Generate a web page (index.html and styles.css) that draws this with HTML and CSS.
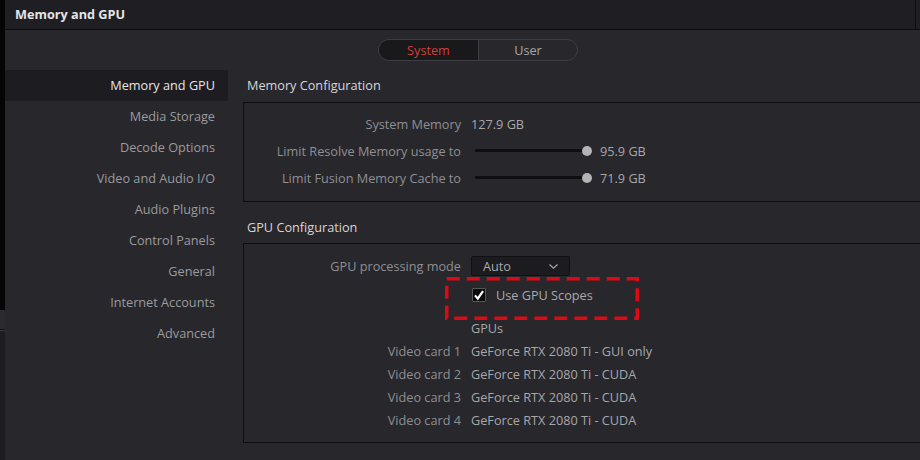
FILE: index.html
```html
<!DOCTYPE html>
<html lang="en">
<head>
    <meta charset="UTF-8">
    <title>Memory and GPU</title>
    <link rel="stylesheet" href="styles.css">
</head>
<body>
    <div class="screen">
        <!-- window behind, only its edge shows -->
        <div class="edge">
            <div class="edge-top"></div>
            <div class="edge-tab"></div>
            <div class="edge-rest"></div>
        </div>

        <div class="window">
            <div class="titlebar">Memory and GPU</div>

            <div class="tabs-row">
                <div class="tabs">
                    <span class="tab tab-active">System</span>
                    <span class="tab">User</span>
                </div>
            </div>

            <div class="main">
                <!-- settings categories -->
                <ul class="sidebar">
                    <li class="side-item selected">Memory and GPU</li>
                    <li class="side-item">Media Storage</li>
                    <li class="side-item">Decode Options</li>
                    <li class="side-item">Video and Audio I/O</li>
                    <li class="side-item">Audio Plugins</li>
                    <li class="side-item">Control Panels</li>
                    <li class="side-item">General</li>
                    <li class="side-item">Internet Accounts</li>
                    <li class="side-item">Advanced</li>
                </ul>

                <div class="content">
                    <h2 class="section-title first">Memory Configuration</h2>
                    <div class="panel panel-memory">
                        <div class="row">
                            <span class="label">System Memory</span>
                            <span class="value">127.9 GB</span>
                        </div>
                        <div class="row">
                            <span class="label">Limit Resolve Memory usage to</span>
                            <span class="slider"><span class="track"></span><span class="thumb"></span></span>
                            <span class="value">95.9 GB</span>
                        </div>
                        <div class="row">
                            <span class="label">Limit Fusion Memory Cache to</span>
                            <span class="slider"><span class="track"></span><span class="thumb"></span></span>
                            <span class="value">71.9 GB</span>
                        </div>
                    </div>

                    <h2 class="section-title">GPU Configuration</h2>
                    <div class="panel panel-gpu">
                        <div class="row row-mode">
                            <span class="label">GPU processing mode</span>
                            <span class="dropdown">
                                Auto
                                <svg class="chevron" width="11" height="7" viewBox="0 0 11 7">
                                    <path d="M1.5 1.5 L5.5 5.2 L9.5 1.5" fill="none" stroke="#a9a9ad" stroke-width="1.1"/>
                                </svg>
                            </span>
                        </div>
                        <div class="row row-check">
                            <span class="label"></span>
                            <span class="checkbox">
                                <svg width="14" height="14" viewBox="0 0 14 14">
                                    <path d="M3 7.4 L5.8 10.6 L11 3.2" fill="none" stroke="#ffffff" stroke-width="2.2"/>
                                </svg>
                            </span>
                            <span class="check-label">Use GPU Scopes</span>
                        </div>
                        <div class="gpu-list">
                            <div class="row row-small">
                                <span class="label"></span>
                                <span class="value">GPUs</span>
                            </div>
                            <div class="row row-small">
                                <span class="label">Video card 1</span>
                                <span class="value">GeForce RTX 2080 Ti - GUI only</span>
                            </div>
                            <div class="row row-small">
                                <span class="label">Video card 2</span>
                                <span class="value">GeForce RTX 2080 Ti - CUDA</span>
                            </div>
                            <div class="row row-small">
                                <span class="label">Video card 3</span>
                                <span class="value">GeForce RTX 2080 Ti - CUDA</span>
                            </div>
                            <div class="row row-small">
                                <span class="label">Video card 4</span>
                                <span class="value">GeForce RTX 2080 Ti - CUDA</span>
                            </div>
                        </div>

                        <!-- red dashed highlight drawn over the checkbox -->
                        <svg class="highlight" width="194" height="43" viewBox="0 0 194 43">
                            <rect x="1.75" y="1.75" width="190.5" height="39.5" fill="none"
                                  stroke="#dc0a14" stroke-width="3.5" stroke-dasharray="13 7"/>
                        </svg>
                    </div>
                </div>
            </div>
        </div>
    </div>
</body>
</html>
```

FILE: styles.css
```css
/* Page base */
body {
    margin: 0;
    background-color: #000000;
    font-family: "Open Sans", "Noto Sans", sans-serif;
    font-size: 12.7px;
}

.screen {
    display: flex;
    width: 920px;
    height: 460px;
    overflow: hidden;
}

/* Edge of the window behind */
.edge {
    width: 5px;
    display: flex;
    flex-direction: column;
}

.edge-top {
    height: 310px;
    background-color: #050505;
}

.edge-tab {
    height: 19px;
    background-color: #2b2a2f;
    border-bottom: 1px solid #121214;
}

.edge-rest {
    flex: 1;
    background-color: #1d1d21;
    border-top: 1px solid #3a3a3e;
}

/* Preferences window */
.window {
    flex: 1;
    background-color: #28272c;
}

.titlebar {
    height: 29px;
    line-height: 29px;
    padding-left: 10px;
    font-weight: bold;
    color: #e4e4e6;
    border-bottom: 1px solid #0d0d0f;
    background: linear-gradient(to right, #1f1e22 calc(100% - 5px), #0d0d0f calc(100% - 5px),
                #0d0d0f calc(100% - 4px), #1f1e22 calc(100% - 4px));
}

/* System / User switch */
.tabs-row {
    display: flex;
    padding: 9px 0 0 373px;
}

.tabs {
    display: flex;
    height: 20px;
    border: 1px solid #3e3d43;
    border-radius: 11px;
    overflow: hidden;
}

.tab {
    width: 98px;
    line-height: 20px;
    text-align: center;
    color: #a6a6a9;
}

.tab-active {
    width: 99px;
    background-color: #19181b;
    border-right: 1px solid #3e3d43;
    color: #d2403c;
}

/* Main area */
.main {
    display: flex;
    margin-top: 9px;
}

.sidebar {
    list-style: none;
    margin: 0;
    padding: 0;
    width: 223px;
}

.side-item {
    height: 31px;
    line-height: 31px;
    padding-right: 13px;
    text-align: right;
    color: #9b9b9e;
}

.side-item.selected {
    background-color: #1d1c20;
    color: #e6e6e8;
}

.content {
    flex: 1;
    margin-left: 15px;
}

.section-title {
    margin: 0;
    padding: 10px 0 0 4px;
    height: 31px;
    line-height: 31px;
    font-size: inherit;
    font-weight: normal;
    color: #d6d6d8;
}

.section-title.first {
    padding-top: 0;
    height: 32px;
    line-height: 31px;
}

.panel {
    position: relative;
    border: 1px solid #0e0e10;
    border-right: none;
}

.panel-memory {
    padding: 7px 0 10px 0;
}

.panel-gpu {
    height: 189px;
    padding-top: 9px;
}

/* Label / value rows */
.row {
    display: flex;
    align-items: center;
    height: 27px;
}

.label {
    width: 217px;
    margin-right: 10px;
    text-align: right;
    color: #8f8f92;
}

.value {
    color: #a7a7aa;
}

.slider {
    position: relative;
    display: flex;
    align-items: center;
    width: 122px;
    height: 10px;
    margin-right: 7px;
}

.track {
    margin-left: 4px;
    width: 113px;
    height: 3px;
    background-color: #0f0f11;
    border-radius: 1px;
}

.thumb {
    position: absolute;
    left: 111px;
    top: 0;
    width: 10px;
    height: 10px;
    border-radius: 50%;
    background-color: #b4b4b6;
}

/* GPU mode dropdown */
.row-mode {
    height: 26px;
}

.dropdown {
    display: flex;
    align-items: center;
    justify-content: space-between;
    box-sizing: border-box;
    width: 99px;
    height: 20px;
    padding: 0 10px 0 11px;
    background-color: #1c1b1f;
    border: 1px solid #111113;
    border-radius: 2px;
    color: #a9a9ac;
}

.chevron {
    margin-top: 1px;
}

/* Checkbox */
.row-check {
    height: 32px;
}

.checkbox {
    display: flex;
    box-sizing: border-box;
    width: 14px;
    height: 14px;
    margin-left: 1px;
    background-color: #0b0b0c;
    border: 1px solid #55555a;
    border-radius: 1px;
}

.checkbox svg {
    margin: -1px;
}

.check-label {
    margin-left: 10px;
    color: #a9a9ac;
}

/* GPU list */
.gpu-list {
    margin-top: 5px;
}

.row-small {
    height: 23px;
}

/* Annotation over the checkbox */
.highlight {
    position: absolute;
    left: 201px;
    top: 33px;
}
```
